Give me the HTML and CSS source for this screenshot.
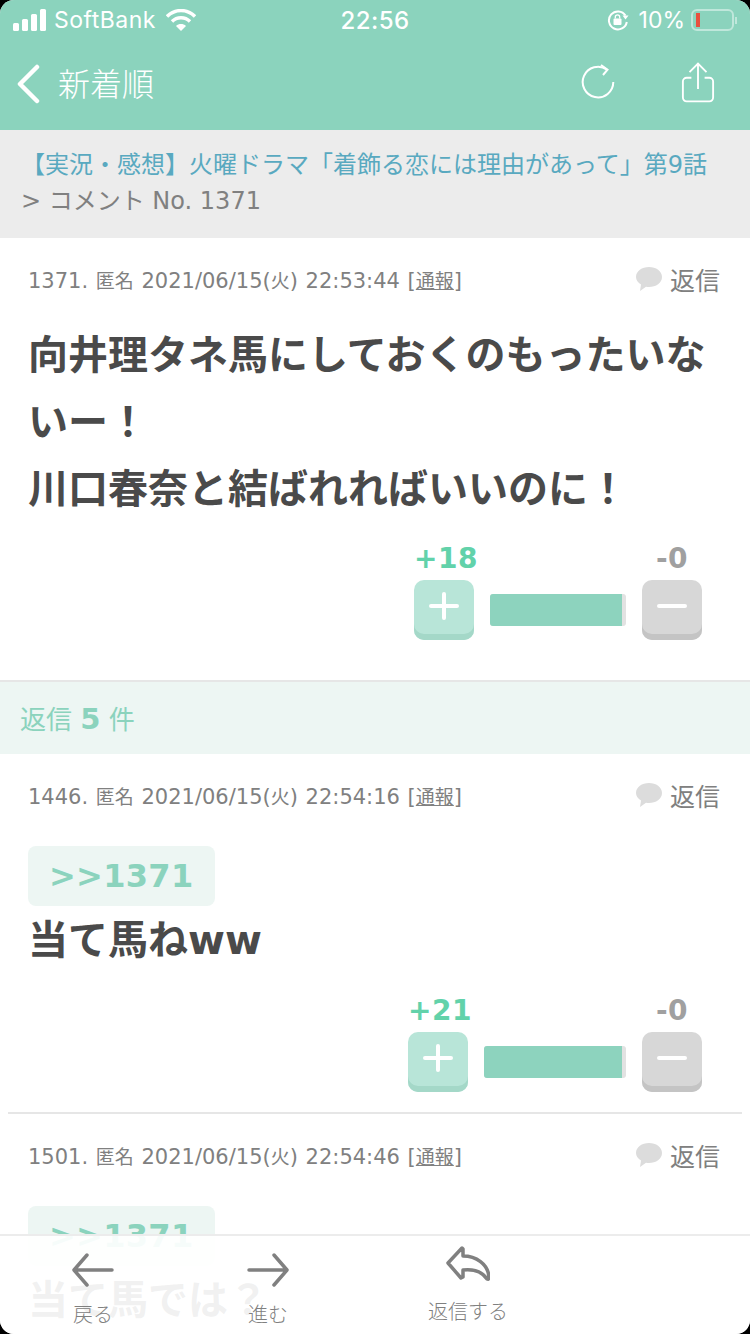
FILE: index.html
```html
<!DOCTYPE html>
<html lang="ja">
<head>
    <meta charset="UTF-8">
    <meta name="viewport" content="width=device-width, initial-scale=1.0">
    <title>新着順</title>
    <link rel="stylesheet" href="styles.css">
</head>
<body>
    <div class="screen">
        <header class="top">
            <div class="status">
                <div class="status-left">
                    <svg class="signal" width="34" height="22" viewBox="0 0 34 22"><rect x="0" y="14" width="6" height="8" rx="1.5"/><rect x="9" y="10" width="6" height="12" rx="1.5"/><rect x="18" y="5" width="6" height="17" rx="1.5"/><rect x="27" y="0" width="6" height="22" rx="1.5"/></svg>
                    <span>SoftBank</span>
                    <svg class="wifi" width="30" height="22" viewBox="0 0 30 22"><path d="M1 7.500C9-.5 21-.5 29 7.500" fill="none" stroke="#fff" stroke-width="3.400"/><path d="M6 12.500c5-5 13-5 18 0" fill="none" stroke="#fff" stroke-width="3.400"/><path d="M15 22l-5-5c2.800-2.600 7.200-2.600 10 0z" fill="#fff"/></svg>
                </div>
                <div class="status-time">22:56</div>
                <div class="status-right">
                    <svg width="22" height="22" viewBox="0 0 22 22"><path d="M18.500 6.500A9 9 0 1 0 19.800 13" fill="none" stroke="#fff" stroke-width="2"/><path d="M15.500 6.500h6l-3 4z" fill="#fff"/><rect x="6.500" y="9.500" width="8" height="6.500" rx="1" fill="#fff"/><path d="M8.300 9.500V8a2.200 2.200 0 0 1 4.400 0v1.500" fill="none" stroke="#fff" stroke-width="1.300"/></svg>
                    <span>10%</span>
                    <div class="battery"><div class="battery-level"></div></div>
                    <div class="battery-cap"></div>
                </div>
            </div>
            <nav class="nav">
                <svg class="back" width="26" height="40" viewBox="0 0 26 40"><path d="M21 3L4 20l17 17" fill="none" stroke="#fff" stroke-width="4.500" stroke-linecap="round" stroke-linejoin="round"/></svg>
                <div class="nav-title">新着順</div>
                <svg class="reload" width="36" height="36" viewBox="0 0 36 36"><path d="M27 5.700A15.300 15.300 0 1 0 33.300 18" fill="none" stroke="#fff" stroke-width="2"/><path d="M21 1l6.500 4.700L23 11" fill="none" stroke="#fff" stroke-width="2"/></svg>
                <svg class="share" width="34" height="41" viewBox="0 0 36 42"><path d="M11 16H6a4 4 0 0 0-4 4v17a4 4 0 0 0 4 4h24a4 4 0 0 0 4-4V20a4 4 0 0 0-4-4h-5M18 28V2M9 10l9-9 9 9" fill="none" stroke="#fff" stroke-width="2"/></svg>
            </nav>
        </header>

        <div class="crumb">
            <a class="crumb-link">【実況・感想】火曜ドラマ「着飾る恋には理由があって」第9話</a><br>
            &gt; コメント No. 1371
        </div>

        <article class="comment first">
            <div class="meta">
                <div>1371. <span class="jp">匿名</span> 2021/06/15(<span class="jp">火</span>) 22:53:44 [<u class="jp">通報</u>]</div>
                <div class="reply-link"><svg width="28" height="26" viewBox="0 0 28 26"><path d="M14 1c7 0 13 4 13 10s-6 10-13 10c-1 0-2 0-3-.2L5 25l1-6.500C3 16.500 1 14 1 11 1 5 7 1 14 1z" fill="#dcdcdc"/></svg>返信</div>
            </div>
            <p class="body">向井理タネ馬にしておくのもったいないー！<br>川口春奈と結ばれればいいのに！</p>
            <div class="votes">
                <div class="vote">
                    <div class="count plus">+18</div>
                    <div class="btn btn-plus"><span class="bar-h"></span><span class="bar-v"></span></div>
                </div>
                <div class="ratio wide"><div class="ratio-fill"></div></div>
                <div class="vote">
                    <div class="count minus">-0</div>
                    <div class="btn btn-minus"><span class="bar-h"></span></div>
                </div>
            </div>
        </article>

        <div class="reply-count">返信 <b>5</b> 件</div>

        <article class="comment">
            <div class="meta">
                <div>1446. <span class="jp">匿名</span> 2021/06/15(<span class="jp">火</span>) 22:54:16 [<u class="jp">通報</u>]</div>
                <div class="reply-link"><svg width="28" height="26" viewBox="0 0 28 26"><path d="M14 1c7 0 13 4 13 10s-6 10-13 10c-1 0-2 0-3-.2L5 25l1-6.500C3 16.500 1 14 1 11 1 5 7 1 14 1z" fill="#dcdcdc"/></svg>返信</div>
            </div>
            <div class="anchor">&gt;&gt;1371</div>
            <p class="body short">当て馬ねww</p>
            <div class="votes">
                <div class="vote">
                    <div class="count plus">+21</div>
                    <div class="btn btn-plus"><span class="bar-h"></span><span class="bar-v"></span></div>
                </div>
                <div class="ratio"><div class="ratio-fill"></div></div>
                <div class="vote">
                    <div class="count minus">-0</div>
                    <div class="btn btn-minus"><span class="bar-h"></span></div>
                </div>
            </div>
        </article>

        <div class="rule"></div>

        <article class="comment">
            <div class="meta">
                <div>1501. <span class="jp">匿名</span> 2021/06/15(<span class="jp">火</span>) 22:54:46 [<u class="jp">通報</u>]</div>
                <div class="reply-link"><svg width="28" height="26" viewBox="0 0 28 26"><path d="M14 1c7 0 13 4 13 10s-6 10-13 10c-1 0-2 0-3-.2L5 25l1-6.500C3 16.500 1 14 1 11 1 5 7 1 14 1z" fill="#dcdcdc"/></svg>返信</div>
            </div>
            <div class="anchor">&gt;&gt;1371</div>
            <p class="body short">当て馬では？</p>
        </article>

        <footer class="tabbar">
            <div class="tab tab-back">
                <svg width="42" height="34" viewBox="0 0 42 34"><path d="M40 17H2M15 2L2 17l13 15" fill="none" stroke="#808080" stroke-width="3.500" stroke-linecap="round" stroke-linejoin="round"/></svg>
                <span>戻る</span>
            </div>
            <div class="tab tab-next">
                <svg width="42" height="34" viewBox="0 0 42 34"><path d="M2 17h38M27 2l13 15-13 15" fill="none" stroke="#808080" stroke-width="3.500" stroke-linecap="round" stroke-linejoin="round"/></svg>
                <span>進む</span>
            </div>
            <div class="tab tab-reply">
                <svg width="44" height="36" viewBox="0 0 44 36"><path d="M16 2L2 17l13 15 2-1v-7c9-1 18 0 24 9 2 1 2-1 2-2C42 18 30 10 17 10V3z" fill="none" stroke="#808080" stroke-width="3.500" stroke-linejoin="round"/></svg>
                <span>返信する</span>
            </div>
        </footer>
    </div>
</body>
</html>
```

FILE: styles.css
```css
html {
    background: #000;
}
body {
    margin: 0;
    font-family: "DejaVu Sans", "Noto Sans CJK JP", sans-serif;
    color: #808080;
}
.screen {
    position: relative;
    width: 750px;
    height: 1334px;
    overflow: hidden;
    background: #fff;
    border-radius: 14px;
}
.top {
    height: 130px;
    background: #8bd3bd;
    color: #fff;
}
.status {
    display: grid;
    grid-template-columns: 1fr auto 1fr;
    align-items: center;
    height: 40px;
    padding: 0 13px;
}
.status-left,
.status-right {
    display: flex;
    align-items: center;
    font-family: "Inter", "Noto Sans", sans-serif;
    font-size: 23px;
}
.status-left span {
    margin: 0 10px 0 7px;
    letter-spacing: 0.5px;
}
.signal {
    fill: #fff;
}
.status-time {
    font-family: "Inter", sans-serif;
    font-size: 24px;
    font-weight: 500;
    letter-spacing: 0.4px;
}
.status-right {
    justify-content: flex-end;
}
.status-right span {
    margin: 0 6px 0 10px;
}
.battery {
    width: 43px;
    height: 22px;
    border: 2px solid rgba(255, 255, 255, 0.45);
    border-radius: 6px;
    padding: 2px;
    box-sizing: border-box;
}
.battery-level {
    width: 4px;
    height: 100%;
    margin-left: 1px;
    background: #e8503f;
}
.battery-cap {
    width: 2px;
    height: 7px;
    margin-left: 1px;
    background: rgba(255, 255, 255, 0.45);
}
.nav {
    display: flex;
    align-items: center;
    height: 90px;
    padding: 0 35px 0 16px;
}
.back {
    margin-top: -2px;
}
.nav-title {
    flex: 1;
    margin: -6px 0 0 16px;
    font-family: "Noto Sans CJK JP", sans-serif;
    font-weight: 300;
    font-size: 32px;
}
.reload {
    margin: -6px 65px 0 0;
}
.share {
    margin-top: -5px;
}

.crumb {
    height: 108px;
    box-sizing: border-box;
    padding: 17px 21px 0;
    background: #ececec;
    font-size: 24px;
    line-height: 36px;
    color: #808080;
}
.crumb-link {
    color: #59a9c0;
}

.comment {
    padding: 0 28px;
}
.meta {
    display: flex;
    justify-content: space-between;
    align-items: center;
    box-sizing: border-box;
    height: 84px;
    padding-bottom: 2px;
    font-size: 21px;
    word-spacing: 1px;
}
.jp {
    font-size: 19px;
}
.reply-link {
    display: flex;
    align-items: center;
    gap: 7px;
    margin: 0 2px 0 0;
    font-size: 25px;
}
.body {
    margin: 0;
    font-size: 40px;
    font-weight: bold;
    line-height: 67px;
    color: #4a4a4a;
}
.body.short {
    line-height: 68px;
}

.votes {
    display: flex;
    justify-content: flex-end;
    align-items: flex-end;
    box-sizing: border-box;
    height: 138px;
    padding: 0 20px 20px 0;
}
.first .votes {
    height: 157px;
    padding-bottom: 40px;
}
.vote {
    width: 60px;
    text-align: center;
}
.count {
    height: 37px;
    font-size: 28px;
    line-height: 32px;
    font-weight: bold;
    letter-spacing: 0.5px;
    white-space: nowrap;
}
.count.plus {
    color: #62d2aa;
}
.count.minus {
    color: #a0a0a0;
}
.btn {
    position: relative;
    height: 60px;
    box-sizing: border-box;
    border-radius: 10px;
}
.btn-plus {
    background: #b8e5d8;
    box-shadow: inset 0 -6px 0 #a4d8c8;
}
.btn-minus {
    background: #d7d7d7;
    box-shadow: inset 0 -6px 0 #c4c4c4;
}
/* plus / minus strokes sit on top of the key */
.bar-h,
.bar-v {
    position: absolute;
    background: #fff;
    border-radius: 2px;
}
.bar-h {
    left: 15px;
    top: 24px;
    width: 30px;
    height: 4px;
}
.bar-v {
    left: 28px;
    top: 12px;
    width: 4px;
    height: 28px;
}
.ratio {
    width: 142px;
    height: 32px;
    margin: 0 16px 14px;
    border-radius: 3px;
    background: #e2e2e2;
    overflow: hidden;
}
.ratio.wide {
    width: 136px;
}
.ratio-fill {
    width: 138px;
    height: 100%;
    background: #8dd3be;
}
.ratio.wide .ratio-fill {
    width: 132px;
}

.reply-count {
    height: 74px;
    box-sizing: border-box;
    padding: 2px 0 0 20px;
    border-top: 2px solid #e6e6e6;
    background: #edf6f3;
    color: #8bd3bd;
    font-size: 26px;
    line-height: 70px;
}
.reply-count b {
    font-size: 29px;
}

.anchor {
    display: inline-block;
    height: 60px;
    padding: 0 21px;
    border-radius: 8px;
    background: #edf6f3;
    color: #8bd3bd;
    font-size: 32px;
    font-weight: bold;
    line-height: 60px;
    letter-spacing: 0.3px;
    vertical-align: top;
    margin-top: 8px;
}
.rule {
    height: 2px;
    margin: 0 8px;
    background: #e6e6e6;
}

.tabbar {
    position: absolute;
    left: 0;
    right: 0;
    bottom: 0;
    height: 100px;
    border-top: 2px solid #ececec;
    box-sizing: border-box;
    background: rgba(255, 255, 255, 0.92);
}
.tab {
    position: absolute;
    top: 17px;
    display: flex;
    flex-direction: column;
    align-items: center;
    font-family: "Noto Sans CJK JP", sans-serif;
    font-weight: 300;
    font-size: 20px;
    color: #808080;
}
.tab span {
    line-height: 24px;
    margin-top: 15px;
}
.tab-back {
    left: 72px;
}
.tab-next {
    left: 247px;
}
.tab-reply {
    left: 428px;
    top: 10px;
}
.tab-reply span {
    margin-top: 17px;
}
```
